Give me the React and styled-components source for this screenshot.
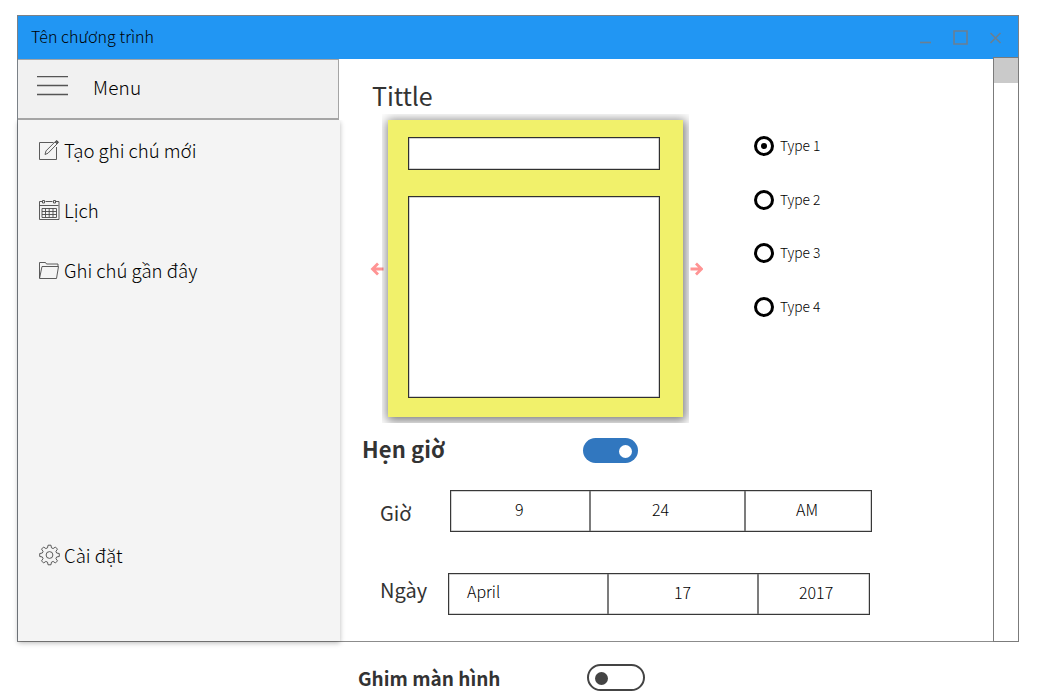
import React from "react";
import styled, { createGlobalStyle } from "styled-components";

const GlobalStyle = createGlobalStyle`
  * { box-sizing: border-box; }
  body { margin: 0; background: #fff; }
`;

const Page = styled.div`
  width: 1052px;
  height: 700px;
  overflow: hidden;
  padding: 15px 0 0 17px;
  background: #fff;
  font-family: "Noto Sans CJK JP", "Noto Sans", sans-serif;
  color: #111;
`;

const Text = styled.span`
  display: block;
  flex: none;
  white-space: nowrap;
  line-height: 1;
  margin: ${(p) => p.$top || 0}px 0 0 ${(p) => p.$left || 0}px;
  font-size: ${(p) => p.$size}px;
  font-weight: ${(p) => p.$weight || 300};
  letter-spacing: ${(p) => p.$spacing || 0}px;
  color: ${(p) => p.$color || "#000"};
`;

const Window = styled.section`
  width: 1002px;
  height: 627px;
  border: 1px solid #7b8187;
  border-bottom-color: #8c8c8c;
  display: flex;
  flex-direction: column;
`;

const TitleBar = styled.header`
  height: 43px;
  flex: none;
  background: #2196f3;
  display: flex;
  justify-content: space-between;
  padding: 12px 15px 0 13px;
`;

const WindowControls = styled.svg`
  display: block;
  width: 84px;
  height: 20px;
`;

const Body = styled.div`
  flex: 1;
  min-height: 0;
  display: flex;
`;

const Sidebar = styled.aside`
  width: 322px;
  flex: none;
  display: flex;
  flex-direction: column;
`;

const MenuHeader = styled.div`
  width: 321px;
  height: 61px;
  flex: none;
  background: #f1f1f1;
  border: solid #a5a5a5;
  border-width: 1px 1px 2px 0;
  display: flex;
  gap: 25px;
  padding: 16px 0 0 19px;
`;

const Burger = styled.svg`
  width: 31px;
  height: 24px;
  flex: none;
`;

const Nav = styled.nav`
  flex: 1;
  background: #f4f4f4;
  box-shadow: 0 2px 5px rgba(0, 0, 0, 0.28);
  clip-path: inset(0 -8px -8px -8px);
  padding: 19px 0 0 20px;
  display: flex;
  flex-direction: column;
`;

const NavItem = styled.div`
  display: flex;
  gap: 4px;
  height: 60px;
  margin-top: ${(p) => p.$top || 0}px;
`;

const NavIcon = styled.svg`
  width: 22px;
  height: 24px;
  flex: none;
  margin-top: -1px;
  fill: none;
  stroke: #4a4a4a;
  stroke-width: 0.9;
`;

const Content = styled.main`
  width: 653px;
  flex: none;
  padding: 24px 0 0 22px;
`;

const Scrollbar = styled.div`
  width: 26px;
  flex: none;
  margin: -2px -1px -1px 0;
  border: 1px solid #7b7b7b;
  background: #fff;
`;

const Thumb = styled.div`
  height: 25px;
  background: #cacaca;
`;

const TopRow = styled.div`
  display: flex;
  height: 310px;
  margin-top: 6px;
`;

const Carousel = styled.div`
  display: flex;
  width: 340px;
  padding-left: 8px;
  flex: none;
`;

const Arrow = styled.svg`
  width: 14px;
  height: 14px;
  flex: none;
  margin-top: 148px;
  fill: none;
  stroke: #ff9494;
  stroke-width: 2.8;
`;

const NoteFrame = styled.div`
  width: 307px;
  height: 309px;
  flex: none;
  padding: 6px;
  margin-left: -2px;
  overflow: hidden;
`;

const Note = styled.div`
  width: 295px;
  height: 297px;
  padding: 17px 0 0 20px;
  background: #f1f16b;
  box-shadow: 1px 2px 10px 2px rgba(0, 0, 0, 0.5);
`;

const NoteField = styled.div`
  width: 252px;
  height: ${(p) => p.$height}px;
  margin-bottom: 26px;
  border: 1px solid #303030;
  background: #fff;
  box-shadow: inset 0 0 0 0.5px rgba(0, 0, 0, 0.35);
`;

const RadioList = styled.div`
  padding: 22px 0 0 52px;
`;

const RadioRow = styled.div`
  display: flex;
  gap: 6px;
  height: 53.7px;
`;

const Radio = styled.span`
  width: 20px;
  height: 20px;
  flex: none;
  border: 3px solid #000;
  border-radius: 50%;
  display: flex;
  align-items: center;
  justify-content: center;

  &::after {
    content: "";
    width: 6.6px;
    height: 6.6px;
    border-radius: 50%;
    background: ${(p) => (p.$checked ? "#000" : "transparent")};
  }
`;

const SettingRow = styled.div`
  display: flex;
  justify-content: space-between;
  width: ${(p) => p.$width}px;
  margin: ${(p) => p.$margin};
`;

const Toggle = styled.span`
  flex: none;
  width: ${(p) => (p.$on ? 55 : 58)}px;
  height: ${(p) => (p.$on ? 25 : 27)}px;
  border-radius: 14px;
  border: ${(p) => (p.$on ? "0" : "2px solid #444")};
  background: ${(p) => (p.$on ? "#3177bf" : "#fff")};
  display: flex;
  align-items: center;
  justify-content: ${(p) => (p.$on ? "flex-end" : "flex-start")};
  padding: ${(p) => (p.$on ? "1px 6px 0 0" : "1px 0 0 6px")};

  &::after {
    content: "";
    width: 13px;
    height: 13px;
    border-radius: 50%;
    background: ${(p) => (p.$on ? "#fff" : "#444")};
  }
`;

const FieldRow = styled.div`
  display: flex;
  margin: ${(p) => p.$top || 0}px 0 0 18px;
  height: 42px;
`;

const FieldLabel = styled.div`
  width: ${(p) => p.$width}px;
  flex: none;
  padding-top: ${(p) => p.$top}px;
`;

const Picker = styled.div`
  display: flex;
  width: 422px;
  height: 42px;
  border: 1px solid #383838;
  box-shadow: inset 0 0 0 0.5px rgba(0, 0, 0, 0.35);
`;

const Cell = styled.div`
  width: ${(p) => p.$width}px;
  flex: none;
  padding: ${(p) => p.$top || 10}px 0 0 ${(p) => p.$pad}px;
  border-right: ${(p) => (p.$last ? "0" : "2px solid #7c7c7c")};
`;

const navItems = [
  {
    label: "Tạo ghi chú mới",
    icon: (
      <>
        <path d="M15.5 4.5H1.5V21.5H18.5V9" />
        <path d="M7 16.5l1-3.6L18.5 2.4l2 2L10 15.2z M17 4l2 2" />
        <path d="M18.3 3.2l1.6 1.6" strokeWidth="2" />
      </>
    ),
  },
  {
    label: "Lịch",
    icon: (
      <>
        <path d="M4.5 3.5H1.5V21.5H21V3.5H17.5 M7.5 3.5h7 M1.5 7.5h19" />
        <path d="M4.5 5v-2.5h2V5z M15.5 5v-2.5h2V5z" />
        <path d="M4 10.5h14.5V19.5H4z M4 13.5h14.5 M4 16.5h14.5 M7.5 10.5V19.5 M11.2 10.5V19.5 M15 10.5V19.5" />
      </>
    ),
  },
  {
    label: "Ghi chú gần đây",
    icon: (
      <path d="M1.5 20V4.5h6l1 1.5h11.5v2.5 M1.5 20.5h17l2-12H4z" />
    ),
  },
];

function gearPath() {
  const points = [];
  for (let i = 0; i < 8; i++) {
    const c = (i * Math.PI) / 4;
    [[-0.27, 7.4], [-0.15, 9.9], [0.15, 9.9], [0.27, 7.4]].forEach(([a, r]) => {
      points.push(
        `${(11.5 + r * Math.sin(c + a)).toFixed(2)} ${(12 - r * Math.cos(c + a)).toFixed(2)}`
      );
    });
  }
  return `M${points.join("L")}Z`;
}

export default function App() {
  return (
    <Page>
      <GlobalStyle />
      <Window>
        <TitleBar>
          <Text $size={16} $spacing={0.05}>Tên chương trình</Text>
          <WindowControls viewBox="0 0 84 20" fill="none" stroke="#6b7f92" strokeWidth="1.6">
            <path d="M1 14.5h11" />
            <path d="M35 3h13v13h-13z" />
            <path d="M71.5 5l10 10M81.5 5l-10 10" />
          </WindowControls>
        </TitleBar>
        <Body>
          <Sidebar>
            <MenuHeader>
              <Burger viewBox="0 0 31 24" stroke="#555" strokeWidth="1.3">
                <path d="M0 0.5h31M0 9.5h31M0 18.5h31" />
              </Burger>
              <Text $size={19} $top={1} $spacing={0.2}>Menu</Text>
            </MenuHeader>
            <Nav>
              {navItems.map((item) => (
                <NavItem key={item.label}>
                  <NavIcon viewBox="0 0 22 24">{item.icon}</NavIcon>
                  <Text $size={18.6} $top={2}>{item.label}</Text>
                </NavItem>
              ))}
              <NavItem $top={225}>
                <NavIcon viewBox="0 0 22 24">
                  <path d={gearPath()} />
                  <circle cx="11.5" cy="12" r="3.4" />
                </NavIcon>
                <Text $size={18.6} $top={2}>Cài đặt</Text>
              </NavItem>
            </Nav>
          </Sidebar>
          <Content>
            <Text $size={25} $color="#333" $left={10} $spacing={-0.1} $weight={400}>Tittle</Text>
            <TopRow>
              <Carousel>
                <Arrow viewBox="0 0 14 14">
                  <path d="M8 1.5L2.5 7l5.5 5.5M2.5 7H13.5" />
                </Arrow>
                <NoteFrame>
                  <Note>
                    <NoteField $height={33} />
                    <NoteField $height={202} />
                  </Note>
                </NoteFrame>
                <Arrow viewBox="0 0 14 14">
                  <path d="M7 1.5L12.5 7l-5.5 5.5M12.5 7H1.5" />
                </Arrow>
              </Carousel>
              <RadioList>
                {["Type 1", "Type 2", "Type 3", "Type 4"].map((name, i) => (
                  <RadioRow key={name}>
                    <Radio $checked={i === 0} />
                    <Text $size={13.8} $top={3}>{name}</Text>
                  </RadioRow>
                ))}
              </RadioList>
            </TopRow>
            <SettingRow $width={276} $margin="14px 0 27px 0">
              <Text $size={22} $top={-1} $spacing={0.1} $weight={700} $color="#333">Hẹn giờ</Text>
              <Toggle $on />
            </SettingRow>
            <FieldRow>
              <FieldLabel $width={70} $top={13}>
                <Text $size={20} $color="#333" $weight={400}>Giờ</Text>
              </FieldLabel>
              <Picker>
                <Cell $width={140} $pad={64}><Text $size={16}>9</Text></Cell>
                <Cell $width={155} $pad={61}><Text $size={16}>24</Text></Cell>
                <Cell $width={125} $pad={50} $last><Text $size={16}>AM</Text></Cell>
              </Picker>
            </FieldRow>
            <FieldRow $top={41}>
              <FieldLabel $width={68} $top={7}>
                <Text $size={20} $color="#333" $weight={400}>Ngày</Text>
              </FieldLabel>
              <Picker>
                <Cell $width={160} $pad={18} $top={9}><Text $size={16}>April</Text></Cell>
                <Cell $width={150} $pad={65} $top={10}><Text $size={16}>17</Text></Cell>
                <Cell $width={110} $pad={40} $last $top={10}><Text $size={16}>2017</Text></Cell>
              </Picker>
            </FieldRow>
          </Content>
          <Scrollbar>
            <Thumb />
          </Scrollbar>
        </Body>
      </Window>
      <SettingRow $width={286.5} $margin="22px 0 0 341px">
        <Text $size={19} $weight={700} $color="#333" $top={4}>Ghim màn hình</Text>
        <Toggle />
      </SettingRow>
    </Page>
  );
}
